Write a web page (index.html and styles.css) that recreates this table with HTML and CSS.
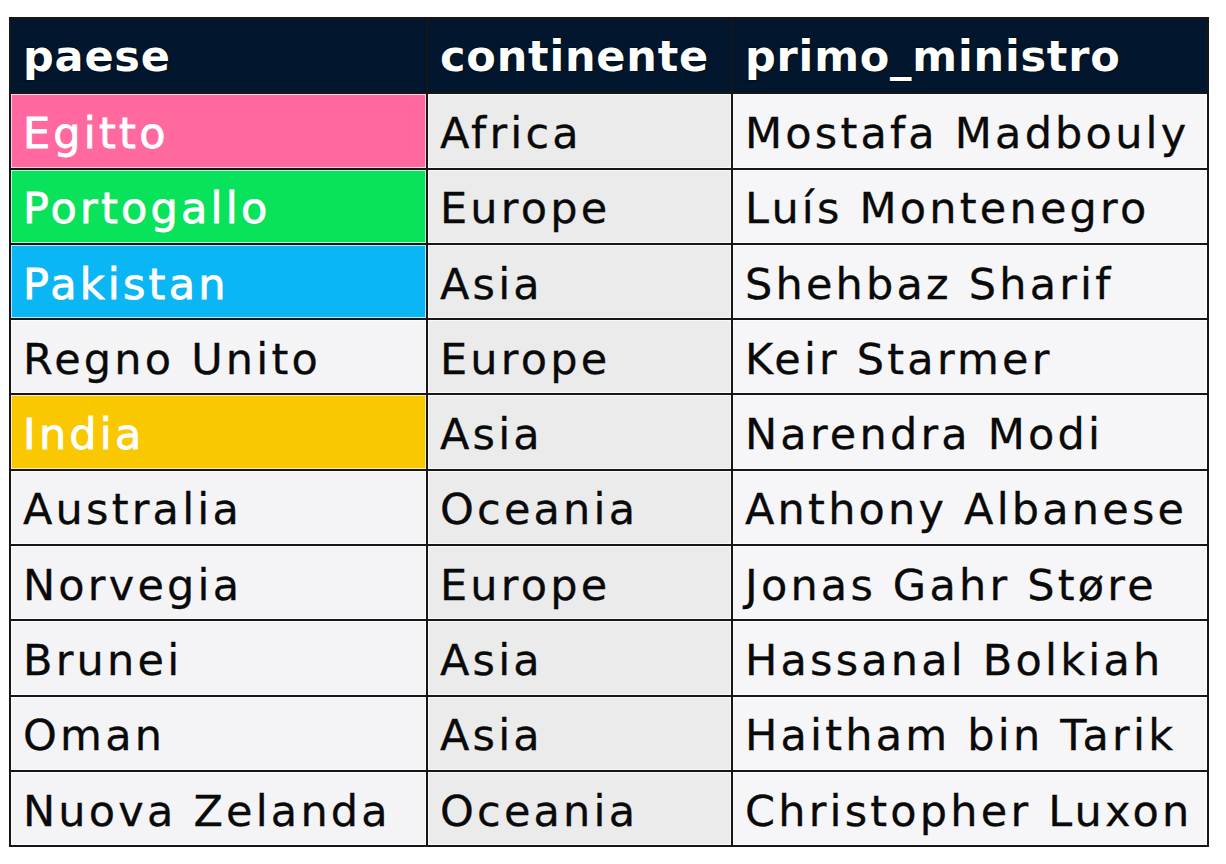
FILE: index.html
```html
<!DOCTYPE html>
<html lang="it">
<head>
<meta charset="utf-8">
<title>Primi ministri</title>
<link rel="stylesheet" href="styles.css">
</head>
<body>
<div class="sheet">
  <div class="cell head">paese</div>
  <div class="cell head">continente</div>
  <div class="cell head">primo_ministro</div>

  <div class="cell c1 pink">Egitto</div>
  <div class="cell c2">Africa</div>
  <div class="cell c3">Mostafa Madbouly</div>

  <div class="cell c1 green">Portogallo</div>
  <div class="cell c2">Europe</div>
  <div class="cell c3">Luís Montenegro</div>

  <div class="cell c1 blue">Pakistan</div>
  <div class="cell c2">Asia</div>
  <div class="cell c3">Shehbaz Sharif</div>

  <div class="cell c1">Regno Unito</div>
  <div class="cell c2">Europe</div>
  <div class="cell c3">Keir Starmer</div>

  <div class="cell c1 yellow">India</div>
  <div class="cell c2">Asia</div>
  <div class="cell c3">Narendra Modi</div>

  <div class="cell c1">Australia</div>
  <div class="cell c2">Oceania</div>
  <div class="cell c3">Anthony Albanese</div>

  <div class="cell c1">Norvegia</div>
  <div class="cell c2">Europe</div>
  <div class="cell c3">Jonas Gahr Støre</div>

  <div class="cell c1">Brunei</div>
  <div class="cell c2">Asia</div>
  <div class="cell c3">Hassanal Bolkiah</div>

  <div class="cell c1">Oman</div>
  <div class="cell c2">Asia</div>
  <div class="cell c3">Haitham bin Tarik</div>

  <div class="cell c1">Nuova Zelanda</div>
  <div class="cell c2">Oceania</div>
  <div class="cell c3">Christopher Luxon</div>
</div>
</body>
</html>
```
FILE: styles.css
```css
html, body {
  margin: 0;
  padding: 0;
  background: #ffffff;
}
body {
  padding: 17px 0 0 9px;
  font-family: "DejaVu Sans", sans-serif;
}
.sheet {
  display: grid;
  width: 1200px;
  box-sizing: border-box;
  grid-template-columns: 415px 303px 474px;
  grid-auto-rows: 73.3px;
  gap: 2px;
  padding: 2px;
  background: #161616;
}
.cell {
  display: flex;
  align-items: center;
  padding: 4px 0 0 12px;
  box-sizing: border-box;
  font-size: 43px;
  letter-spacing: 3.2px;
  color: #0a0a0a;
  white-space: nowrap;
  overflow: hidden;
  -webkit-text-stroke: 0.3px #0a0a0a;
  box-shadow: inset 0 0 0 1px rgba(255,255,255,0.7);
}
.head {
  background: #02172d;
  color: #ffffff;
  font-weight: bold;
  letter-spacing: 0.8px;
  box-shadow: none;
  padding-top: 0;
  -webkit-text-stroke: 0;
  text-shadow: 0 0 2px #000;
}
.c1 { background: #f4f4f7; }
.c2 { background: #ebebeb; }
.c3 { background: #f6f6f8; }
.pink, .green, .blue, .yellow {
  color: #fff;
  -webkit-text-stroke: 0.8px #fff;
}
.pink { background: #ff69a0; }
.green { background: #08e35b; }
.blue { background: #0bb6f4; }
.yellow { background: #fac800; }
```
